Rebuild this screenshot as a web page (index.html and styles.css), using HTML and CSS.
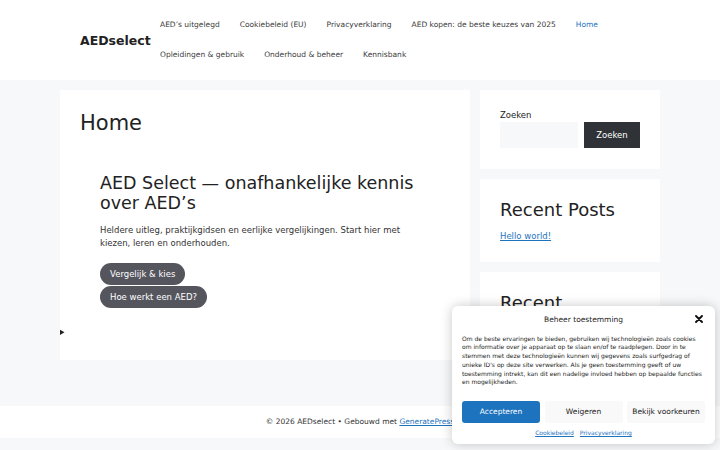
FILE: index.html
```html
<!DOCTYPE html>
<html lang="nl">
<head>
<meta charset="utf-8">
<title>AEDselect</title>
<link rel="stylesheet" href="styles.css">
</head>
<body>
<header class="site-header">
  <div class="brand">AEDselect</div>
  <nav class="main-nav">
    <a href="#">AED’s uitgelegd</a>
    <a href="#">Cookiebeleid (EU)</a>
    <a href="#">Privacyverklaring</a>
    <a href="#">AED kopen: de beste keuzes van 2025</a>
    <a href="#" class="current">Home</a>
    <a href="#">Opleidingen &amp; gebruik</a>
    <a href="#">Onderhoud &amp; beheer</a>
    <a href="#">Kennisbank</a>
  </nav>
</header>
<div class="site-content">
  <main class="content-card">
    <h1 class="page-title">Home</h1>
    <section class="hero">
      <h2 class="hero-title">AED Select — onafhankelijke kennis over AED’s</h2>
      <p class="hero-text">Heldere uitleg, praktijkgidsen en eerlijke vergelijkingen. Start hier met kiezen, leren en onderhouden.</p>
      <div class="hero-buttons">
        <a href="#" class="pill">Vergelijk &amp; kies</a>
        <a href="#" class="pill">Hoe werkt een AED?</a>
      </div>
    </section>
    <details class="toggle"><summary></summary></details>
  </main>
  <aside class="sidebar">
    <div class="widget widget-search">
      <label class="search-label">Zoeken</label>
      <div class="search-row">
        <span class="search-input"></span>
        <span class="search-btn">Zoeken</span>
      </div>
    </div>
    <div class="widget widget-posts">
      <h2 class="widget-title">Recent Posts</h2>
      <a href="#" class="widget-link">Hello world!</a>
    </div>
    <div class="widget widget-cut">
      <h2 class="widget-title">Recent</h2>
    </div>
  </aside>
</div>
<footer class="site-footer">
  © 2026 AEDselect • Gebouwd met <a href="#">GeneratePress</a>
</footer>

<div class="cookie-banner">
  <div class="cookie-head">
    <span class="cookie-title">Beheer toestemming</span>
    <svg class="cookie-close" width="8" height="8" viewBox="0 0 8 8"><path d="M1 1 L7 7 M7 1 L1 7" stroke="#111" stroke-width="1.9" stroke-linecap="round"/></svg>
  </div>
  <p class="cookie-text">Om de beste ervaringen te bieden, gebruiken wij technologieën zoals cookies om informatie over je apparaat op te slaan en/of te raadplegen. Door in te stemmen met deze technologieën kunnen wij gegevens zoals surfgedrag of unieke ID's op deze site verwerken. Als je geen toestemming geeft of uw toestemming intrekt, kan dit een nadelige invloed hebben op bepaalde functies en mogelijkheden.</p>
  <div class="cookie-buttons">
    <span class="cbtn cbtn-accept">Accepteren</span>
    <span class="cbtn">Weigeren</span>
    <span class="cbtn">Bekijk voorkeuren</span>
  </div>
  <div class="cookie-links">
    <a href="#">Cookiebeleid</a>
    <a href="#">Privacyverklaring</a>
  </div>
</div>
</body>
</html>
```
FILE: styles.css
```css
* { box-sizing: border-box; }
html, body { margin: 0; padding: 0; }
body {
  font-family: "DejaVu Sans", sans-serif;
  background: #f7f8f9;
  color: #222;
  width: 720px;
  height: 450px;
  overflow: hidden;
}
a { color: #1e73be; }

.site-header {
  background: #fff;
  height: 80px;
  display: flex;
  align-items: center;
  padding: 10px 60px 10px 80px;
}
.brand {
  font-weight: bold;
  font-size: 12.5px;
  color: #222;
  width: 70px;
  flex: none;
}
.main-nav {
  display: flex;
  flex-wrap: wrap;
  flex: 1;
}
.main-nav a {
  font-size: 7.5px;
  line-height: 30px;
  padding: 0 10px;
  color: #3a3a3a;
  text-decoration: none;
}
.main-nav a.current { color: #1e73be; }

.site-content {
  display: flex;
  gap: 10px;
  margin: 10px 60px 0;
  align-items: flex-start;
}
.content-card {
  background: #fff;
  width: 410px;
  height: 270px;
  padding: 18px 20px 0;
  position: relative;
}
.page-title {
  font-weight: normal;
  font-size: 21px;
  margin: 0 0 35px;
  line-height: 30px;
}
.hero { padding: 0 20px; }
.hero-title {
  font-weight: normal;
  font-size: 17.5px;
  line-height: 20px;
  margin: 0 0 11px;
}
.hero-text {
  font-size: 8.5px;
  line-height: 13px;
  margin: 0 0 13px;
  color: #333;
}
.hero-buttons {
  display: flex;
  flex-direction: column;
  align-items: flex-start;
  gap: 1px;
}
.pill {
  background: #55555e;
  color: #fff;
  text-decoration: none;
  font-size: 8.5px;
  line-height: 22px;
  padding: 0 10px;
  border-radius: 11px;
}
.toggle {
  position: absolute;
  left: 0;
  top: 238px;
  font-size: 8px;
}

.sidebar {
  width: 180px;
  display: flex;
  flex-direction: column;
  gap: 10px;
}
.widget {
  background: #fff;
  padding: 20px;
}
.widget-search { padding: 19px 20px 20px; height: 79px; }
.search-label {
  display: block;
  font-size: 8.5px;
  line-height: 13px;
  color: #222;
}
.search-row {
  display: flex;
  gap: 6px;
}
.search-input {
  width: 78px;
  height: 26px;
  background: #f7f8f9;
}
.search-btn {
  width: 56px;
  height: 26px;
  background: #2f3337;
  color: #fff;
  font-size: 8.5px;
  display: flex;
  align-items: center;
  justify-content: center;
}
.widget-title {
  font-weight: normal;
  font-size: 18px;
  line-height: 22px;
  margin: 0 0 3px;
  color: #222;
}
.widget-posts { height: 83px; }
.widget-link { font-size: 8.5px; }
.widget-cut { height: 90px; }

.site-footer {
  background: #fff;
  margin-top: 44px;
  height: 32px;
  text-align: center;
  font-size: 7.5px;
  line-height: 32px;
  color: #333;
}

.cookie-banner {
  position: absolute;
  left: 452px;
  top: 306px;
  width: 263px;
  height: 138px;
  background: #fff;
  border-radius: 6px;
  box-shadow: 0 0 12px rgba(0,0,0,0.22);
  padding: 8px 10px 0;
}
.cookie-head {
  display: flex;
  justify-content: center;
  align-items: center;
  height: 10px;
  position: relative;
}
.cookie-title {
  font-size: 7.5px;
  color: #222;
}
.cookie-close {
  position: absolute;
  right: 2px;
  top: 1px;
}
.cookie-text {
  font-size: 6px;
  line-height: 8.8px;
  color: #222;
  margin: 10.5px 0 0;
}
.cookie-buttons {
  display: flex;
  gap: 4.5px;
  margin-top: 13.5px;
}
.cbtn {
  flex: 1;
  height: 22px;
  border-radius: 3px;
  background: #f9f9f9;
  color: #222;
  font-size: 7.5px;
  display: flex;
  align-items: center;
  justify-content: center;
}
.cbtn-accept { background: #1e73be; color: #fff; }
.cookie-links {
  display: flex;
  justify-content: center;
  gap: 6px;
  margin-top: 6px;
  line-height: 8px;
}
.cookie-links a { font-size: 6px; color: #1e73be; }
```
